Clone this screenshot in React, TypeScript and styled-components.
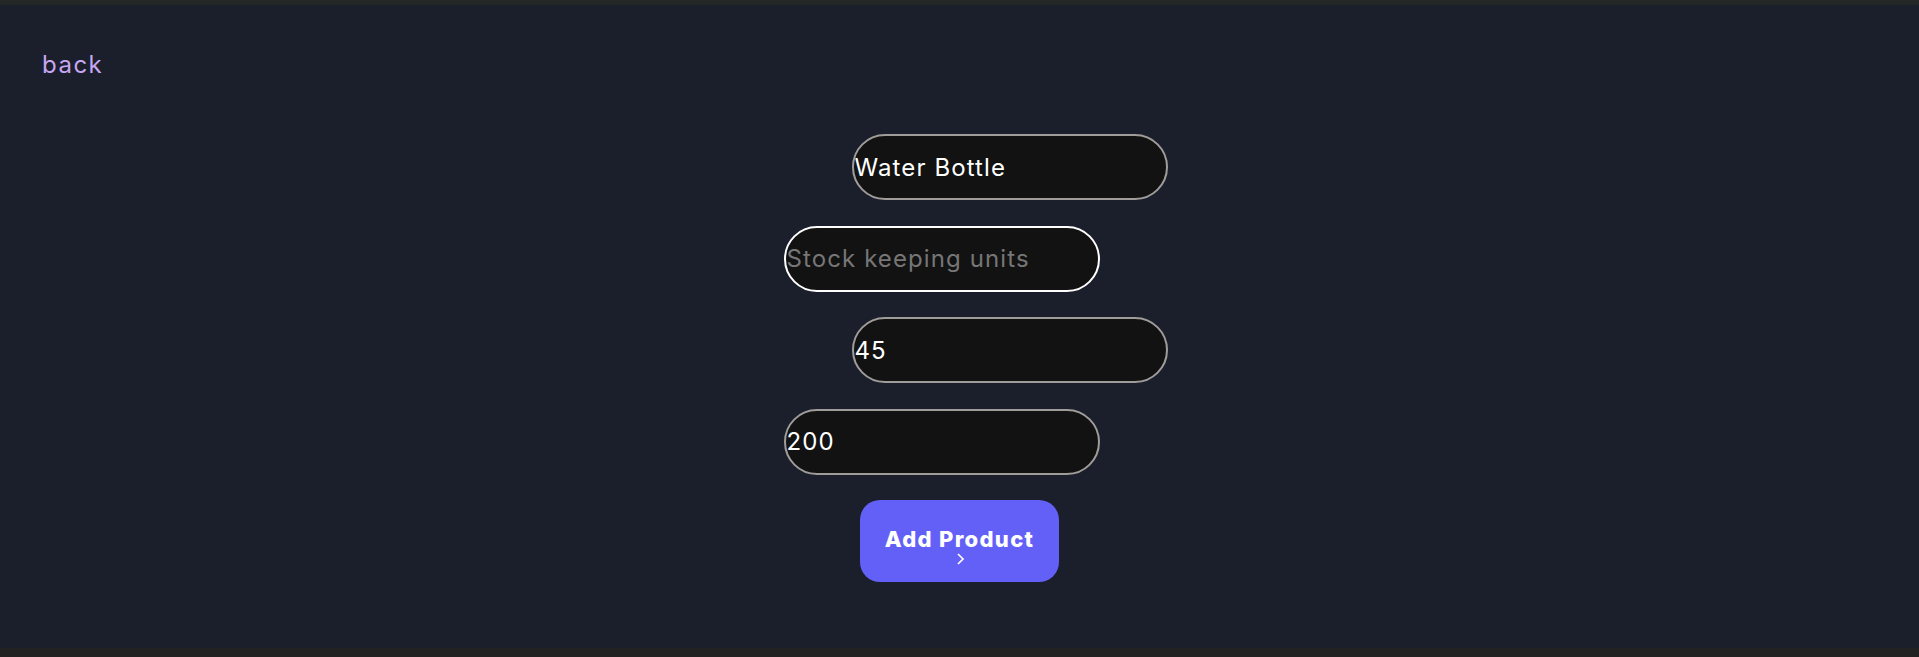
import styled, { createGlobalStyle } from "styled-components";

const GlobalStyle = createGlobalStyle`
  html, body {
    margin: 0;
    padding: 0;
    background: #222222;
  }
  body {
    font-family: "Inter", "Noto Sans", sans-serif;
  }
`;

const Page = styled.div`
  border-top: 5px solid #232826;
  border-bottom: 9px solid #222222;
  background: #1a1f2b;
  height: 643px;
  display: flex;
  flex-direction: column;
`;

const Header = styled.header`
  padding: 46px 0 0 42px;
  height: 84px;
  box-sizing: border-box;
`;

const BackLink = styled.a`
  color: #c7a6f2;
  font-size: 24px;
  letter-spacing: 1.5px;
  line-height: 28px;
  text-decoration: none;
  cursor: pointer;
`;

const Form = styled.form`
  display: flex;
  flex-direction: column;
  align-items: center;
  gap: 25.5px;
  padding-top: 45px;
`;

const Field = styled.input<{ $shift: number }>`
  box-sizing: border-box;
  width: 316px;
  height: 66px;
  margin-left: ${(p) => (p.$shift > 0 ? p.$shift * 2 : 0)}px;
  margin-right: ${(p) => (p.$shift < 0 ? -p.$shift * 2 : 0)}px;
  padding: 0 0 0 1px;
  border-radius: 33px;
  border: 2px solid ${(p) => (p.autoFocus ? "#ffffff" : "#a09c99")};
  background: #121212;
  color: #ffffff;
  font-family: inherit;
  font-size: 24px;
  letter-spacing: 1.1px;
  outline: none;

  &::placeholder {
    color: #767676;
  }
`;

const SubmitButton = styled.button`
  width: 199px;
  height: 82px;
  border: none;
  border-radius: 20px;
  background: #6360f8;
  color: #ffffff;
  font-family: inherit;
  font-weight: 800;
  font-size: 22px;
  letter-spacing: 1.3px;
  line-height: 26px;
  display: flex;
  flex-direction: column;
  align-items: center;
  justify-content: center;
  padding: 9px 0 0;
  cursor: pointer;
`;

const Chevron = () => (
  <svg width="12" height="14" viewBox="0 0 12 14" fill="none">
    <path d="M4 2 L9 7 L4 12" stroke="#ffffff" strokeWidth="1.7" />
  </svg>
);

const App = () => {
  return (
    <>
      <GlobalStyle />
      <Page>
        <Header>
          <BackLink>back</BackLink>
        </Header>
        <Form onSubmit={(e) => e.preventDefault()}>
          <Field $shift={50} type="text" defaultValue="Water Bottle" placeholder="Product name" />
          <Field $shift={-18} type="text" placeholder="Stock keeping units" autoFocus />
          <Field $shift={50} type="number" defaultValue="45" placeholder="Quantity" />
          <Field $shift={-18} type="number" defaultValue="200" placeholder="Price" />
          <SubmitButton type="submit">
            Add Product
            <Chevron />
          </SubmitButton>
        </Form>
      </Page>
    </>
  );
};

export default App;
